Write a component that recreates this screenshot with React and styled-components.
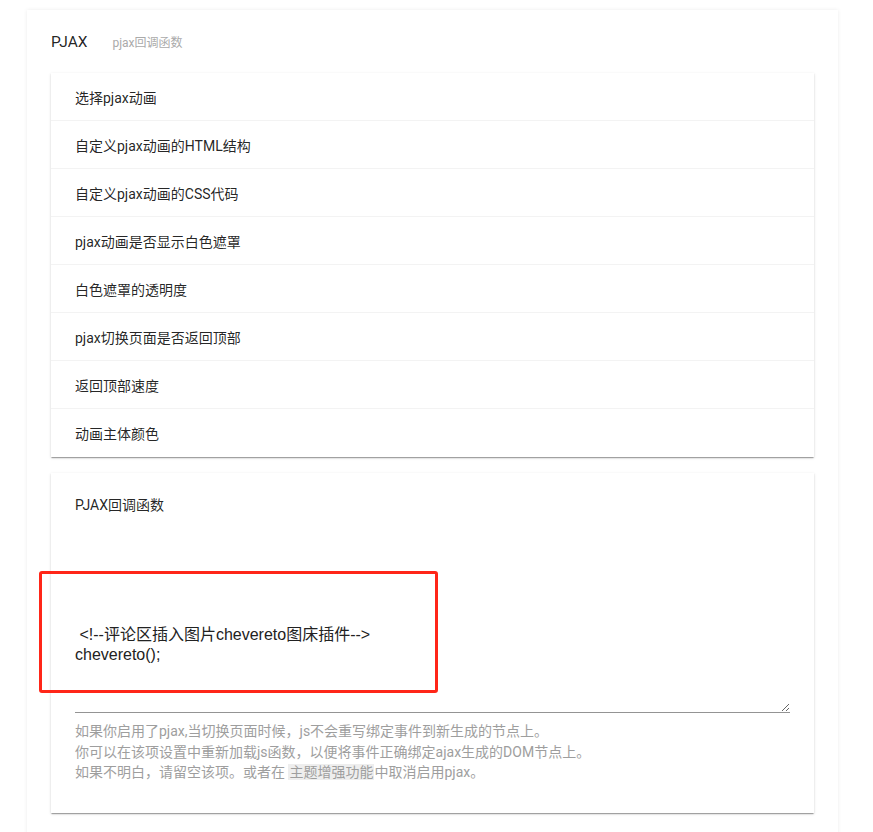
import React from 'react';
import styled, { createGlobalStyle } from 'styled-components';

const textDark = 'rgba(0, 0, 0, 0.87)';
const textMuted = '#9e9e9e';
const divider = '#f3f3f3';
const cardShadow =
  '0 2px 1px -1px rgba(0,0,0,.2), 0 1px 1px 0 rgba(0,0,0,.14), 0 1px 3px 0 rgba(0,0,0,.12)';

const GlobalStyle = createGlobalStyle`
  html, body {
    margin: 0;
    background: #fff;
  }
  body {
    font-family: Roboto, 'Noto Sans CJK SC', sans-serif;
    overflow: hidden;
  }
`;

const Page = styled.div`
  padding: 10px 35px 0 27px;
`;

const Panel = styled.section`
  width: 811px;
  box-sizing: border-box;
  background: #fff;
  padding: 0 24px 24px;
  box-shadow: 0 0 4px rgba(0, 0, 0, 0.08);
`;

const PanelHeader = styled.header`
  display: flex;
  align-items: baseline;
  height: 63px;
  padding-top: 22px;
  box-sizing: border-box;
`;

const PanelTitle = styled.h2`
  margin: 0;
  font-size: 15.5px;
  font-weight: 400;
  color: ${textDark};
  line-height: 20px;
`;

const PanelSubtitle = styled.span`
  margin-left: 25px;
  font-size: 12px;
  color: #aaa;
`;

const Card = styled.div`
  position: relative;
  background: #fff;
  box-shadow: ${cardShadow};
  margin-bottom: ${p => p.$gap || 0}px;
`;

const Row = styled.div`
  height: 48px;
  display: flex;
  align-items: center;
  padding: 0 24px;
  font-size: 14px;
  color: ${textDark};
  border-bottom: 1px solid ${divider};
  box-sizing: border-box;

  &:last-child {
    border-bottom: none;
  }
`;

const FieldCard = styled(Card)`
  padding: 20px 24px 30px;
`;

const FieldLabel = styled.label`
  display: block;
  font-size: 14px;
  line-height: 24px;
  color: ${textDark};
`;

const FieldWrap = styled.div`
  position: relative;
`;

const TextArea = styled.textarea`
  display: block;
  width: 100%;
  height: 196px;
  box-sizing: border-box;
  padding: 8px 0;
  border: none;
  border-bottom: 1px solid #949494;
  outline: none;
  resize: vertical;
  background: transparent;
  font-family: 'Liberation Sans', 'Noto Sans CJK SC', sans-serif;
  font-size: 16px;
  line-height: 20px;
  color: #222;
`;

const Highlight = styled.div`
  position: absolute;
  left: -36px;
  top: 54px;
  width: 399px;
  height: 122px;
  box-sizing: border-box;
  border: 3px solid #ff2618;
  border-radius: 3px;
  pointer-events: none;
`;

const Help = styled.div`
  margin-top: 8px;
  font-size: 14px;
  line-height: 20.5px;
  color: ${textMuted};
`;

const Kbd = styled.span`
  background: #eee;
  padding: 0 1px;
`;

const items = [
  '选择pjax动画',
  '自定义pjax动画的HTML结构',
  '自定义pjax动画的CSS代码',
  'pjax动画是否显示白色遮罩',
  '白色遮罩的透明度',
  'pjax切换页面是否返回顶部',
  '返回顶部速度',
  '动画主体颜色',
];

const code = '\n\n\n\n\n <!--评论区插入图片chevereto图床插件-->\nchevereto();';

export default function App() {
  return (
    <Page>
      <GlobalStyle />
      <Panel>
        <PanelHeader>
          <PanelTitle>PJAX</PanelTitle>
          <PanelSubtitle>pjax回调函数</PanelSubtitle>
        </PanelHeader>

        <Card $gap={16}>
          {items.map(label => (
            <Row key={label}>{label}</Row>
          ))}
        </Card>

        <FieldCard>
          <FieldLabel>PJAX回调函数</FieldLabel>
          <FieldWrap>
            <TextArea defaultValue={code} spellCheck={false} />
            <Highlight />
          </FieldWrap>
          <Help>
            如果你启用了pjax,当切换页面时候，js不会重写绑定事件到新生成的节点上。
            <br />
            你可以在该项设置中重新加载js函数，以便将事件正确绑定ajax生成的DOM节点上。
            <br />
            如果不明白，请留空该项。或者在 <Kbd>主题增强功能</Kbd>中取消启用pjax。
          </Help>
        </FieldCard>
      </Panel>
    </Page>
  );
}
